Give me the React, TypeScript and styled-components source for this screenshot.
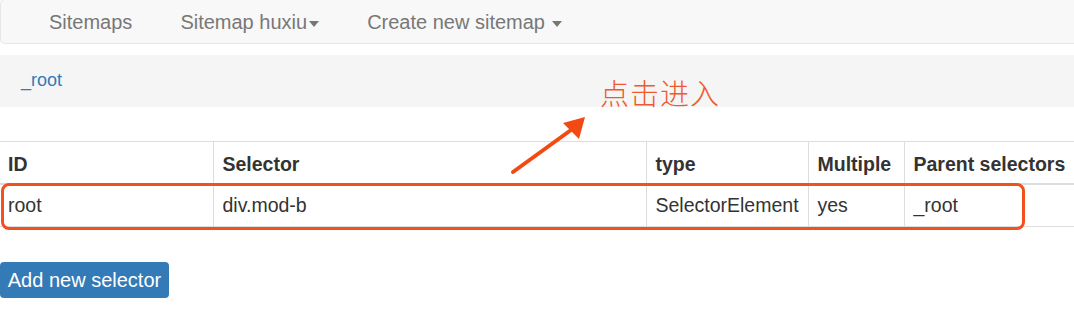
import React from "react";
import styled, { createGlobalStyle } from "styled-components";

const Global = createGlobalStyle`
  html, body { margin: 0; padding: 0; background: #fff; }
  body { font-family: "Liberation Sans", Arial, Helvetica, sans-serif; color: #333; }
`;

const Page = styled.div`
  position: relative;
  width: 1074px;
  height: 313px;
  overflow: hidden;
  display: flex;
  flex-direction: column;
`;

const Navbar = styled.nav`
  height: 45px;
  margin-top: -1px;
  box-sizing: border-box;
  background: #f8f8f8;
  border: 1px solid #e7e7e7;
  border-right: none;
  border-radius: 5px 0 0 5px;
  display: flex;
  align-items: center;
  padding-left: 24px;
  padding-top: 2px;
`;

const NavItem = styled.div<{ $gap?: number }>`
  display: flex;
  align-items: center;
  gap: ${(p) => p.$gap ?? 0}px;
  padding: 0 24px;
  font-size: 20px;
  color: #777;
  height: 100%;
`;

const Caret = styled.span`
  width: 0;
  height: 0;
  border-top: 6px solid #777;
  border-left: 5px solid transparent;
  border-right: 5px solid transparent;
  margin-top: 2px;
`;

const Breadcrumb = styled.div`
  margin-top: 11px;
  height: 52px;
  background: #f5f5f5;
  display: flex;
  align-items: center;
  padding-left: 21px;
  font-size: 18px;
  color: #337ab7;
  padding-bottom: 2px;
  box-sizing: border-box;
`;

const Table = styled.table`
  margin-top: 34px;
  width: 1074px;
  border-collapse: collapse;
  table-layout: fixed;
  font-size: 19.5px;
`;

const Th = styled.th<{ $w: number }>`
  width: ${(p) => p.$w}px;
  height: 42px;
  box-sizing: border-box;
  text-align: left;
  font-weight: bold;
  white-space: nowrap;
  overflow: visible;
  padding: 5px 0 0 9px;
  border-top: 1px solid #ddd;
  border-bottom: 2px solid #ddd;
  border-left: 1px solid #ddd;
  &:first-child { border-left: none; padding-left: 8px; }
`;

const Td = styled.td`
  height: 43px;
  box-sizing: border-box;
  white-space: nowrap;
  padding: 0 0 0 9px;
  border-bottom: 1px solid #ddd;
  border-left: 1px solid #ddd;
  &:first-child { border-left: none; padding-left: 8px; }
`;

const Button = styled.button`
  align-self: flex-start;
  margin-top: 35px;
  height: 36px;
  width: 169px;
  padding: 0;
  border: none;
  border-radius: 4px;
  background: #337ab7;
  color: #fff;
  font-family: "Liberation Sans", Arial, sans-serif;
  font-size: 20px;
`;

const Highlight = styled.div`
  position: absolute;
  left: 1px;
  top: 183px;
  width: 1024px;
  height: 47px;
  box-sizing: border-box;
  border: 3px solid #f2501c;
  border-radius: 8px;
  pointer-events: none;
`;

const Note = styled.div`
  position: absolute;
  left: 600px;
  top: 74px;
  font-family: "Noto Sans CJK SC", "Noto Sans", sans-serif;
  font-size: 29px;
  font-weight: 300;
  letter-spacing: 1px;
  color: #ee5a2e;
  line-height: 36px;
`;

const ArrowSvg = styled.svg`
  position: absolute;
  left: 505px;
  top: 110px;
`;

const cols = [
  { label: "ID", w: 213 },
  { label: "Selector", w: 433 },
  { label: "type", w: 162 },
  { label: "Multiple", w: 96 },
  { label: "Parent selectors", w: 170 },
];

const row = ["root", "div.mod-b", "SelectorElement", "yes", "_root"];

export default function App() {
  return (
    <>
      <Global />
      <Page>
        <Navbar>
          <NavItem>Sitemaps</NavItem>
          <NavItem $gap={2}>
            Sitemap huxiu
            <Caret />
          </NavItem>
          <NavItem $gap={7}>
            Create new sitemap
            <Caret />
          </NavItem>
        </Navbar>
        <Breadcrumb>_root</Breadcrumb>
        <Table>
          <thead>
            <tr>
              {cols.map((c) => (
                <Th key={c.label} $w={c.w}>
                  {c.label}
                </Th>
              ))}
            </tr>
          </thead>
          <tbody>
            <tr>
              {row.map((v, i) => (
                <Td key={i}>{v}</Td>
              ))}
            </tr>
          </tbody>
        </Table>
        <Button>Add new selector</Button>
        <Highlight />
        <Note>点击进入</Note>
        <ArrowSvg width="90" height="70" viewBox="0 0 90 70">
          <path d="M8 62 L66 20" stroke="#f24a12" strokeWidth="4" strokeLinecap="round" fill="none" />
          <path d="M80 7 L58 13 L74 29 Z" fill="#f24a12" />
        </ArrowSvg>
      </Page>
    </>
  );
}
